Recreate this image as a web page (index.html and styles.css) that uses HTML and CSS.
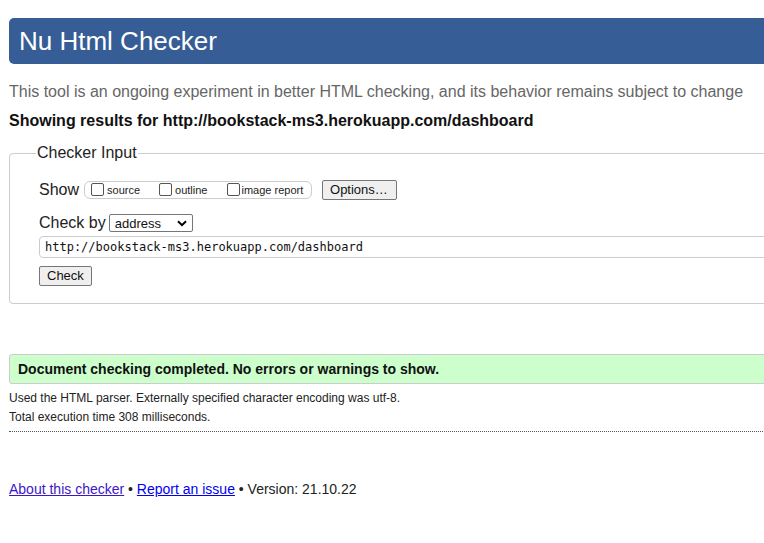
FILE: index.html
```html
<!DOCTYPE html>
<html>
<head>
<meta charset="utf-8">
<title>Nu Html Checker</title>
<link rel="stylesheet" href="styles.css">
</head>
<body>
<div class="page">
  <h1 class="header">Nu Html Checker</h1>
  <p class="intro">This tool is an ongoing experiment in better HTML checking, and its behavior remains subject to change</p>
  <p class="showing">Showing results for http://bookstack-ms3.herokuapp.com/dashboard</p>
  <fieldset class="checker">
    <legend class="legend">Checker Input</legend>
    <div class="row show-row">
      <span class="label">Show</span>
      <span class="show-box">
        <label class="opt"><span class="cb"></span>source</label>
        <label class="opt"><span class="cb"></span>outline</label>
        <label class="opt"><span class="cb"></span>image report</label>
      </span>
      <span class="btn options">Options…</span>
    </div>
    <div class="row by-row">
      <span class="label">Check by</span>
      <span class="select">address<svg class="chev" width="10" height="7" viewBox="0 0 10 7"><path d="M1 1.2 L5 5.2 L9 1.2" fill="none" stroke="#000" stroke-width="2"/></svg></span>
    </div>
    <div class="url">http://bookstack-ms3.herokuapp.com/dashboard</div>
    <span class="btn check">Check</span>
  </fieldset>
  <div class="success">Document checking completed. No errors or warnings to show.</div>
  <p class="meta">Used the HTML parser. Externally specified character encoding was utf-8.</p>
  <p class="meta">Total execution time 308 milliseconds.</p>
  <div class="dots"></div>
  <p class="footer"><a class="link visited" href="#">About this checker</a> • <a class="link" href="#">Report an issue</a> • Version: 21.10.22</p>
</div>
</body>
</html>
```
FILE: styles.css
```css
html { overflow: hidden; }
body {
  margin: 0;
  font-family: "Liberation Sans", Arial, sans-serif;
  color: #222;
  background: #fff;
}
.page {
  width: 800px;
  padding: 18px 0 0 9px;
}
.header {
  margin: 0;
  height: 46px;
  line-height: 46px;
  background: #365d95;
  color: #fff;
  font-weight: normal;
  font-size: 26px;
  padding-left: 10px;
  border-radius: 5px 0 0 5px;
}
.intro {
  margin: 18px 0 0;
  font-size: 16px;
  line-height: 20px;
  color: #666;
}
.showing {
  margin: 9px 0 0;
  font-size: 16px;
  line-height: 20px;
  font-weight: bold;
  color: #111;
}
.checker {
  margin: 13px 0 0;
  border: 1px solid #ccc;
  border-radius: 4px;
  padding: 17px 0 16px 29px;
  height: 125px;
}
.legend {
  font-size: 16px;
  padding: 0 1px;
  margin-left: -3px;
  color: #222;
  line-height: 18px;
}
.row {
  display: flex;
  align-items: center;
}
.label {
  font-size: 16px;
  color: #222;
}
.show-row { height: 22px; }
.show-box {
  display: flex;
  align-items: center;
  margin-left: 5px;
  border: 1px solid #ccc;
  border-radius: 6px;
  height: 16px;
  width: 220px;
  padding-left: 6px;
  box-sizing: content-box;
  font-size: 11px;
}
.opt {
  display: flex;
  align-items: center;
  margin-right: 19px;
  color: #222;
}
.opt:last-child { margin-right: 0; }
.cb {
  width: 11px;
  height: 11px;
  border: 1px solid #555;
  border-radius: 2px;
  margin-right: 3px;
  margin-top: -2px;
}
.opt:nth-child(2) { margin-right: 20px; }
.opt:nth-child(3) .cb { margin-right: 1px; }
.btn {
  display: inline-block;
  font-size: 13px;
  color: #111;
  background: #efefef;
  border: 1px solid #767676;
  border-radius: 2px;
  line-height: 18px;
  padding: 0 5px;
}
.options {
  margin-left: 10px;
  padding: 0 8px 0 7px;
}
.by-row {
  margin-top: 12px;
  height: 20px;
}
.select {
  display: inline-flex;
  align-items: center;
  justify-content: space-between;
  margin-left: 3px;
  width: 72px;
  height: 16px;
  border: 1px solid #767676;
  border-radius: 2px;
  font-size: 13px;
  padding: 0 5px;
  color: #111;
}
.url {
  margin-top: 3px;
  height: 20px;
  line-height: 20px;
  border: 1px solid #ccc;
  border-radius: 4px;
  font-family: "DejaVu Sans Mono", "Liberation Mono", monospace;
  font-size: 12px;
  padding-left: 5px;
  color: #111;
}
.check {
  margin-top: 8px;
  padding: 0 7px;
}
.success {
  margin-top: 50px;
  height: 28px;
  line-height: 28px;
  background: #ccffcc;
  border: 1px solid #ccc;
  border-radius: 3px 0 0 3px;
  font-size: 14px;
  font-weight: bold;
  padding-left: 8px;
  color: #111;
}
.meta {
  margin: 0;
  font-size: 12px;
  line-height: 19px;
  color: #222;
}
.success + .meta { margin-top: 5px; }
.dots {
  margin-top: 4px;
  border-top: 1px dotted #555;
}
.footer {
  margin: 48px 0 0;
  font-size: 14px;
  line-height: 18px;
  color: #222;
}
.link { color: #0000ee; }
.link.visited { color: #3b17c9; }
```
